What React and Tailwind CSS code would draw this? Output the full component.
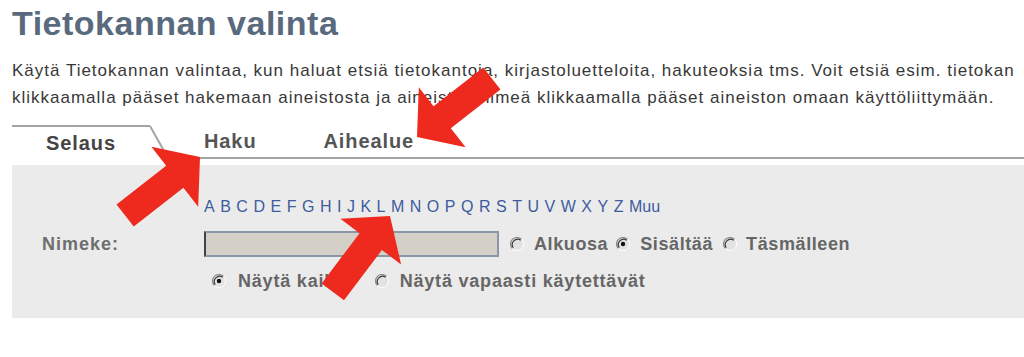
import React from "react";

const letters = "A B C D E F G H I J K L M N O P Q R S T U V W X Y Z".split(" ");

function Radio({ checked }) {
  return (
    <svg width="14" height="14" viewBox="0 0 14 14" className="shrink-0">
      <circle cx="7" cy="7" r="6.5" fill="#e2e2e2" />
      <path d="M2.4 11.6 A6.5 6.5 0 0 1 11.6 2.4" fill="none" stroke="#8a8a8a" strokeWidth="1.2" />
      <path d="M3.3 10.7 A5.3 5.3 0 0 1 10.7 3.3" fill="none" stroke="#3a3a3a" strokeWidth="1.2" />
      <path d="M11.6 2.4 A6.5 6.5 0 0 1 2.4 11.6" fill="none" stroke="#ffffff" strokeWidth="1" />
      {checked && <circle cx="7" cy="7" r="2.2" fill="#111" />}
    </svg>
  );
}

function Arrow({ x, y, angle }) {
  return (
    <polygon
      points="0,0 -32,-38 -32,-14 -95,-14 -95,14 -32,14 -32,38"
      transform={`translate(${x} ${y}) rotate(${angle})`}
      fill="#ee2a1e"
    />
  );
}

export default function App() {
  return (
    <div className="relative w-[1024px] h-[357px] overflow-hidden bg-white font-['Liberation_Sans',Arial,sans-serif]">
      {/* Title */}
      <h1 className="pl-[12px] pt-[3px] h-[40px] leading-[40px] text-[34px] tracking-[0.5px] font-bold text-[#596a7e] whitespace-nowrap">
        Tietokannan valinta
      </h1>

      {/* Intro text */}
      <div className="mt-[17px] pl-[12px] w-[1024px] text-[17px] tracking-[1px] leading-[27px] text-[#383838] whitespace-nowrap overflow-hidden">
        <p>Käytä Tietokannan valintaa, kun haluat etsiä tietokantoja, kirjastoluetteloita, hakuteoksia tms. Voit etsiä esim. tietokan</p>
        <p>klikkaamalla pääset hakemaan aineistosta ja aineiston nimeä klikkaamalla pääset aineiston omaan käyttöliittymään.</p>
      </div>

      {/* Tabs */}
      <div className="mt-[14px] flex h-[34px] pl-[12px]">
        <div className="w-[138px] border-t-2 border-[#a3a3a3] flex items-center justify-center text-[20px] tracking-[0.9px] font-bold text-[#444]">
          Selaus
        </div>
        <svg width="18" height="34" viewBox="0 0 18 34" className="shrink-0">
          <line x1="0" y1="1" x2="18" y2="33" stroke="#a3a3a3" strokeWidth="2" />
        </svg>
        <div className="flex-1 border-b-2 border-[#a3a3a3] flex items-center pl-[36px] gap-[67px] text-[20px] tracking-[0.9px] font-bold text-[#555]">
          <span>Haku</span>
          <span>Aihealue</span>
        </div>
      </div>

      {/* Search panel */}
      <div className="mt-[6px] ml-[12px] h-[153px] bg-[#ebebeb] pl-[192px] pt-[32px]">
        <div className="flex gap-[5.5px] h-[20px] leading-[20px] text-[16px] text-[#3d5c9e]">
          {letters.map((l) => (
            <span key={l}>{l}</span>
          ))}
          <span>Muu</span>
        </div>

        <div className="mt-[14px] flex items-center h-[26px] -ml-[162px]">
          <span className="w-[162px] text-[18px] tracking-[1px] font-bold text-[#6e6e6e]">Nimeke:</span>
          <div className="w-[295px] h-[26px] bg-[#d4d0c8] border-2 border-[#8b97a6] border-l-[#3b4450]" />
          <div className="flex items-center ml-[11px] text-[18px] tracking-[0.6px] font-bold text-[#666]">
            <Radio />
            <span className="ml-[10px]">Alkuosa</span>
            <span className="ml-[8px]"><Radio checked /></span>
            <span className="ml-[10px]">Sisältää</span>
            <span className="ml-[10px]"><Radio /></span>
            <span className="ml-[9px]">Täsmälleen</span>
          </div>
        </div>

        <div className="mt-[11px] flex items-center h-[26px] pl-[8px] text-[18px] tracking-[0.8px] font-bold text-[#666]">
          <Radio checked />
          <span className="ml-[12px]">Näytä kaikki</span>
          <span className="ml-[23px]"><Radio /></span>
          <span className="ml-[11px]">Näytä vapaasti käytettävät</span>
        </div>
      </div>

      {/* Red annotation arrows */}
      <svg className="absolute inset-0 pointer-events-none" width="1024" height="357">
        <Arrow x={200} y={157} angle={-38} />
        <Arrow x={417} y={137} angle={142} />
        <Arrow x={390} y={216} angle={-53} />
      </svg>
    </div>
  );
}
